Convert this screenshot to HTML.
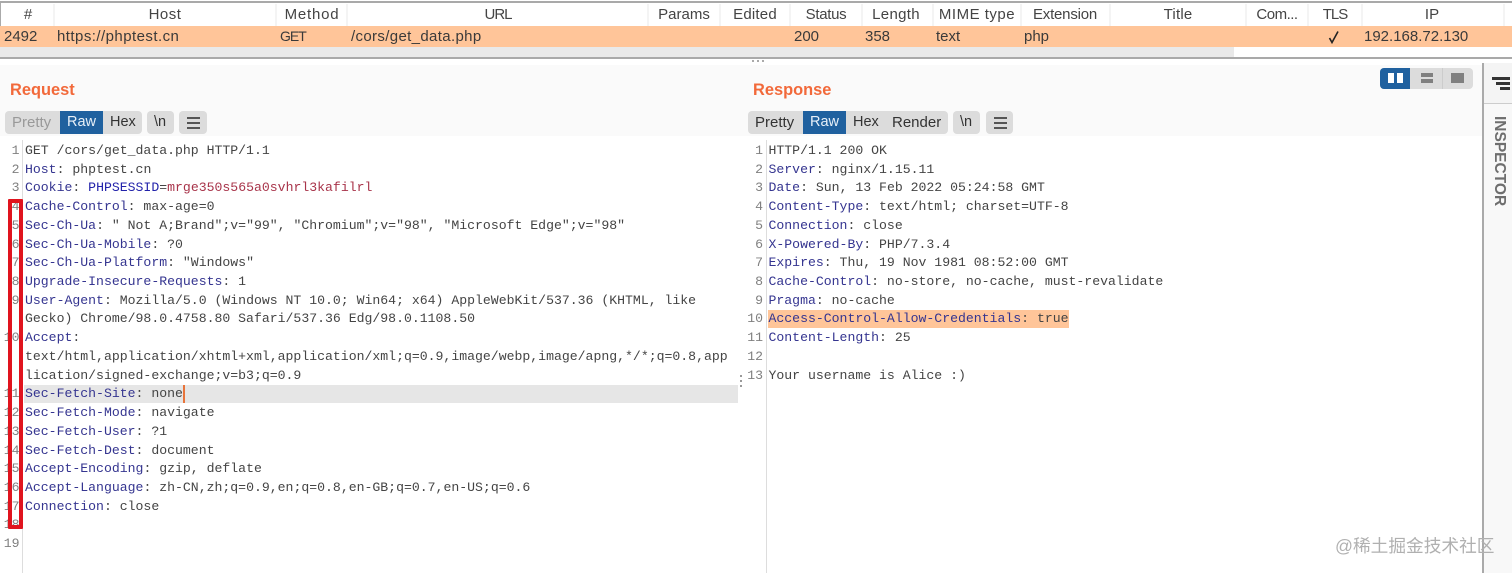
<!DOCTYPE html>
<html><head><meta charset="utf-8">
<style>
html,body{margin:0;padding:0;background:#fff}
#p{position:relative;width:1512px;height:573px;overflow:hidden;background:#fff;font-family:"Liberation Sans",sans-serif;color:#333}
#p div,#p span.a{position:absolute}
.h{top:6px;font-size:15px;line-height:17px;transform:translateX(-50%);white-space:nowrap;color:#444}
.s{top:4px;height:22px;width:2px;background:#f4f4f4}
.r{top:28px;font-size:15px;line-height:17px;white-space:nowrap;color:#3a3a3a}
.code{font-family:"Liberation Mono",monospace;font-size:13.17px;line-height:18.72px;white-space:pre;color:#444}
.num{font-family:"Liberation Mono",monospace;font-size:13.17px;line-height:18.72px;white-space:pre;color:#808080;text-align:right}
.code b{font-weight:normal;color:#353590}
.code i{font-style:normal;color:#2222aa}
.code u{text-decoration:none;color:#a8344a}
.btn{top:111px;height:23px;background:#dcdcdc;border-radius:4px}
.t{top:114px;font-size:14.5px;line-height:17px;color:#333;white-space:nowrap}
.title{top:80px;font-size:16.4px;line-height:20px;font-weight:bold;color:#f2693a}
.bar{left:6px;width:13px;height:1.5px;background:#555}
</style></head><body><div id="p">
<div style="left:0;top:1px;width:1512px;height:2px;background:#a9a9a9"></div>
<div style="left:0;top:3px;width:1px;height:55px;background:#aaa"></div>
<div style="left:0;top:26px;width:1512px;height:21px;background:#ffc599"></div>
<div style="left:0;top:47px;width:1234px;height:10px;background:#e9e9e9"></div>
<div style="left:0;top:57px;width:1512px;height:2px;background:#a9a9a9"></div>

<div class="s" style="left:53px"></div><div class="s" style="left:275px"></div><div class="s" style="left:346px"></div><div class="s" style="left:647px"></div><div class="s" style="left:719px"></div><div class="s" style="left:789px"></div><div class="s" style="left:861px"></div><div class="s" style="left:932px"></div><div class="s" style="left:1020px"></div><div class="s" style="left:1109px"></div><div class="s" style="left:1245px"></div><div class="s" style="left:1307px"></div><div class="s" style="left:1361px"></div><div class="s" style="left:1503px"></div>

<div class="h" style="left:28px">#</div><div class="h" style="left:165px;letter-spacing:.5px">Host</div><div class="h" style="left:312px;letter-spacing:.8px">Method</div><div class="h" style="left:498px;letter-spacing:-1px">URL</div><div class="h" style="left:684px">Params</div><div class="h" style="left:755px;letter-spacing:.2px">Edited</div><div class="h" style="left:826px;letter-spacing:-.3px">Status</div><div class="h" style="left:896px;letter-spacing:.3px">Length</div><div class="h" style="left:977px;letter-spacing:.5px">MIME type</div><div class="h" style="left:1065px;letter-spacing:-.2px">Extension</div><div class="h" style="left:1178px;letter-spacing:.2px">Title</div><div class="h" style="left:1277px;letter-spacing:-.5px">Com...</div><div class="h" style="left:1335px;letter-spacing:-1px">TLS</div><div class="h" style="left:1432px">IP</div>

<div class="r" style="left:4px">2492</div><div class="r" style="left:57px;letter-spacing:.45px">https://phptest.cn</div><div class="r" style="left:280px;font-size:14px;letter-spacing:-1px">GET</div><div class="r" style="left:351px;letter-spacing:.35px">/cors/get_data.php</div><div class="r" style="left:794px">200</div><div class="r" style="left:865px">358</div><div class="r" style="left:936px">text</div><div class="r" style="left:1024px">php</div>
<svg style="position:absolute;left:1328px;top:30px" width="12" height="14" viewBox="0 0 12 14"><path d="M1.5 8 L4 12.5 L10 1.5" fill="none" stroke="#222" stroke-width="1.6"/></svg>
<div class="r" style="left:1364px">192.168.72.130</div>

<div style="left:0;top:65px;width:1483px;height:71px;background:#fafafa"></div>
<div style="left:752px;top:60px;width:2px;height:2px;background:#aaa"></div><div style="left:757px;top:60px;width:2px;height:2px;background:#aaa"></div><div style="left:762px;top:60px;width:2px;height:2px;background:#aaa"></div>

<div class="title" style="left:10px">Request</div>
<div class="title" style="left:753px">Response</div>

<div class="btn" style="left:5px;width:137px"></div>
<div style="left:60px;top:111px;width:43px;height:23px;background:#20619f"></div>
<div class="t" style="left:12px;color:#999;font-size:15px">Pretty</div><div class="t" style="left:67px;color:#e8f0f8">Raw</div><div class="t" style="left:110px">Hex</div>
<div class="btn" style="left:147px;width:27px"></div><div class="t" style="left:154px">\n</div>
<div class="btn" style="left:179px;width:28px"><div class="bar" style="top:6px;left:8px"></div><div class="bar" style="top:11px;left:8px"></div><div class="bar" style="top:16px;left:8px"></div></div>

<div class="btn" style="left:748px;width:200px"></div>
<div style="left:803px;top:111px;width:43px;height:23px;background:#20619f"></div>
<div class="t" style="left:755px;font-size:15px">Pretty</div><div class="t" style="left:810px;color:#e8f0f8">Raw</div><div class="t" style="left:853px">Hex</div><div class="t" style="left:892px;font-size:15px">Render</div>
<div class="btn" style="left:953px;width:27px"></div><div class="t" style="left:960px">\n</div>
<div class="btn" style="left:986px;width:27px"><div class="bar" style="top:6px;left:8px"></div><div class="bar" style="top:11px;left:8px"></div><div class="bar" style="top:16px;left:8px"></div></div>

<div style="left:1380px;top:68px;width:93px;height:21px;background:#dcdcdc;border-radius:4px"></div>
<div style="left:1380px;top:68px;width:30px;height:21px;background:#20619f;border-radius:4px 0 0 4px"></div>
<div style="left:1388px;top:73px;width:6px;height:10px;background:#fff"></div><div style="left:1397px;top:73px;width:6px;height:10px;background:#fff"></div>
<div style="left:1442px;top:68px;width:1px;height:21px;background:#ccc"></div>
<div style="left:1421px;top:73px;width:12px;height:4px;background:#808080"></div><div style="left:1421px;top:79px;width:12px;height:4px;background:#808080"></div>
<div style="left:1451px;top:73px;width:13px;height:10px;background:#808080"></div>

<div style="left:1483px;top:63px;width:29px;height:40px;background:#f4f4f4"></div>
<div style="left:1483px;top:104px;width:29px;height:469px;background:#f8f8f8"></div>
<div style="left:1482px;top:63px;width:2px;height:510px;background:#aaa"></div>
<div style="left:1484px;top:103px;width:28px;height:1px;background:#ccc"></div>
<div style="left:1492px;top:77px;width:18px;height:3px;background:#333"></div>
<div style="left:1496px;top:82px;width:14px;height:3px;background:#333"></div>
<div style="left:1500px;top:87px;width:10px;height:3px;background:#333"></div>
<div style="left:1491px;top:116px;font-size:15.5px;line-height:17px;font-weight:bold;color:#6e6e6e;writing-mode:vertical-rl;white-space:nowrap">INSPECTOR</div>

<div style="left:22px;top:140px;width:1px;height:433px;background:#ddd"></div>
<div style="left:766px;top:140px;width:1px;height:433px;background:#ddd"></div>

<div style="left:24px;top:385px;width:714px;height:18px;background:#e6e6e6"></div>
<div style="left:183px;top:385px;width:2px;height:18px;background:#e8743b"></div>
<div style="left:768px;top:310px;width:301px;height:18px;background:#ffc599"></div>
<div style="left:740px;top:375px;width:2px;height:2px;background:#999"></div><div style="left:740px;top:380px;width:2px;height:2px;background:#999"></div><div style="left:740px;top:385px;width:2px;height:2px;background:#999"></div>

<div class="num" style="left:0;top:142px;width:19.5px">1
2
3
4
5
6
7
8
9

10


11
12
13
14
15
16
17
18
19</div>
<div class="code" style="left:25px;top:142px">GET /cors/get_data.php HTTP/1.1
<b>Host</b>: phptest.cn
<b>Cookie</b>: <i>PHPSESSID</i>=<u>mrge350s565a0svhrl3kafilrl</u>
<b>Cache-Control</b>: max-age=0
<b>Sec-Ch-Ua</b>: " Not A;Brand";v="99", "Chromium";v="98", "Microsoft Edge";v="98"
<b>Sec-Ch-Ua-Mobile</b>: ?0
<b>Sec-Ch-Ua-Platform</b>: "Windows"
<b>Upgrade-Insecure-Requests</b>: 1
<b>User-Agent</b>: Mozilla/5.0 (Windows NT 10.0; Win64; x64) AppleWebKit/537.36 (KHTML, like
Gecko) Chrome/98.0.4758.80 Safari/537.36 Edg/98.0.1108.50
<b>Accept</b>:
text/html,application/xhtml+xml,application/xml;q=0.9,image/webp,image/apng,*/*;q=0.8,app
lication/signed-exchange;v=b3;q=0.9
<b>Sec-Fetch-Site</b>: none
<b>Sec-Fetch-Mode</b>: navigate
<b>Sec-Fetch-User</b>: ?1
<b>Sec-Fetch-Dest</b>: document
<b>Accept-Encoding</b>: gzip, deflate
<b>Accept-Language</b>: zh-CN,zh;q=0.9,en;q=0.8,en-GB;q=0.7,en-US;q=0.6
<b>Connection</b>: close</div>

<div class="num" style="left:740px;top:142px;width:23px">1
2
3
4
5
6
7
8
9
10
11
12
13</div>
<div class="code" style="left:768.5px;top:142px">HTTP/1.1 200 OK
<b>Server</b>: nginx/1.15.11
<b>Date</b>: Sun, 13 Feb 2022 05:24:58 GMT
<b>Content-Type</b>: text/html; charset=UTF-8
<b>Connection</b>: close
<b>X-Powered-By</b>: PHP/7.3.4
<b>Expires</b>: Thu, 19 Nov 1981 08:52:00 GMT
<b>Cache-Control</b>: no-store, no-cache, must-revalidate
<b>Pragma</b>: no-cache
<b>Access-Control-Allow-Credentials</b>: true
<b>Content-Length</b>: 25

Your username is Alice :)</div>

<div style="left:8px;top:199px;width:7px;height:322px;border:4px solid #e0141e;border-radius:1px"></div>

<div style="left:1335px;top:535px;font-family:'Liberation Sans','Noto Sans CJK SC',sans-serif;font-size:17.7px;line-height:22px;color:#b0b0b0;white-space:nowrap">@稀土掘金技术社区</div>
</div></body></html>
